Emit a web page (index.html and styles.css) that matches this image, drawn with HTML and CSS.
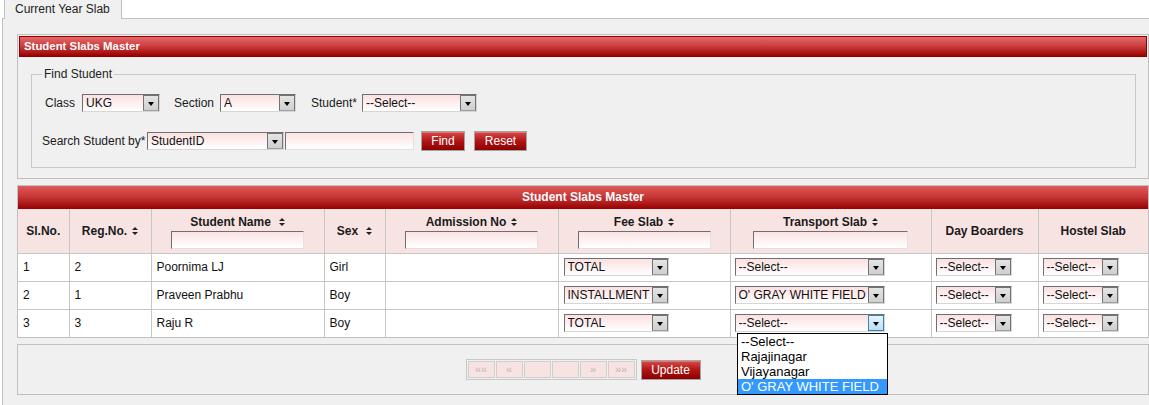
FILE: index.html
```html
<!DOCTYPE html>
<html>
<head>
<meta charset="utf-8">
<link rel="stylesheet" href="styles.css">
</head>
<body>
<div class="tabs"><div class="tab">Current Year Slab</div></div>
<div class="panel">
  <div class="box search-box">
    <div class="bar">Student Slabs Master</div>
    <fieldset class="find">
      <legend>Find Student</legend>
      <div class="row r1">
        <span class="lbl l-class">Class</span>
        <div class="sel w-class"><span class="sel-text">UKG</span><span class="arr"></span></div>
        <span class="lbl l-section">Section</span>
        <div class="sel w-section"><span class="sel-text">A</span><span class="arr"></span></div>
        <span class="lbl l-student">Student*</span>
        <div class="sel w-student"><span class="sel-text">--Select--</span><span class="arr"></span></div>
      </div>
      <div class="row r2">
        <span class="lbl l-search">Search Student by*</span>
        <div class="sel w-search"><span class="sel-text">StudentID</span><span class="arr"></span></div>
        <span class="txt w-searchtxt"></span>
        <span class="btn b-find">Find</span>
        <span class="btn b-reset">Reset</span>
      </div>
    </fieldset>
  </div>

  <div class="box table-box">
    <div class="bar bar-center">Student Slabs Master</div>
    <table>
      <colgroup>
        <col class="c1"><col class="c2"><col class="c3"><col class="c4"><col class="c5"><col class="c6"><col class="c7"><col class="c8"><col class="c9">
      </colgroup>
      <thead>
        <tr>
          <th>Sl.No.</th>
          <th>Reg.No.<svg class="sort" width="6" height="8" viewBox="0 0 6 8"><path d="M3 0L6 3H0zM0 5h6L3 8z"/></svg></th>
          <th><div class="th-t">Student Name<svg class="sort sp" width="6" height="8" viewBox="0 0 6 8"><path d="M3 0L6 3H0zM0 5h6L3 8z"/></svg></div><span class="txt w-filter"></span></th>
          <th>Sex<svg class="sort sp" width="6" height="8" viewBox="0 0 6 8"><path d="M3 0L6 3H0zM0 5h6L3 8z"/></svg></th>
          <th><div class="th-t">Admission No<svg class="sort" width="6" height="8" viewBox="0 0 6 8"><path d="M3 0L6 3H0zM0 5h6L3 8z"/></svg></div><span class="txt w-filter"></span></th>
          <th><div class="th-t">Fee Slab<svg class="sort" width="6" height="8" viewBox="0 0 6 8"><path d="M3 0L6 3H0zM0 5h6L3 8z"/></svg></div><span class="txt w-filter"></span></th>
          <th><div class="th-t">Transport Slab<svg class="sort" width="6" height="8" viewBox="0 0 6 8"><path d="M3 0L6 3H0zM0 5h6L3 8z"/></svg></div><span class="txt w-filter-wide"></span></th>
          <th>Day Boarders</th>
          <th>Hostel Slab</th>
        </tr>
      </thead>
      <tbody>
        <tr>
          <td>1</td><td>2</td><td>Poornima LJ</td><td>Girl</td><td></td>
          <td><div class="sel w-fee"><span class="sel-text">TOTAL</span><span class="arr"></span></div></td>
          <td><div class="sel w-trans"><span class="sel-text">--Select--</span><span class="arr"></span></div></td>
          <td><div class="sel w-small"><span class="sel-text">--Select--</span><span class="arr"></span></div></td>
          <td><div class="sel w-small"><span class="sel-text">--Select--</span><span class="arr"></span></div></td>
        </tr>
        <tr>
          <td>2</td><td>1</td><td>Praveen Prabhu</td><td>Boy</td><td></td>
          <td><div class="sel w-fee"><span class="sel-text">INSTALLMENT</span><span class="arr"></span></div></td>
          <td><div class="sel w-trans"><span class="sel-text">O' GRAY WHITE FIELD</span><span class="arr"></span></div></td>
          <td><div class="sel w-small"><span class="sel-text">--Select--</span><span class="arr"></span></div></td>
          <td><div class="sel w-small"><span class="sel-text">--Select--</span><span class="arr"></span></div></td>
        </tr>
        <tr>
          <td>3</td><td>3</td><td>Raju R</td><td>Boy</td><td></td>
          <td><div class="sel w-fee"><span class="sel-text">TOTAL</span><span class="arr"></span></div></td>
          <td><div class="sel w-trans"><span class="sel-text">--Select--</span><span class="arr arr-hot"></span></div></td>
          <td><div class="sel w-small"><span class="sel-text">--Select--</span><span class="arr"></span></div></td>
          <td><div class="sel w-small"><span class="sel-text">--Select--</span><span class="arr"></span></div></td>
        </tr>
      </tbody>
    </table>
  </div>

  <div class="box pager-box">
    <div class="pager">
      <span class="pg">&laquo;&laquo;</span><span class="pg">&laquo;</span><span class="pg"></span><span class="pg"></span><span class="pg">&raquo;</span><span class="pg">&raquo;&raquo;</span>
    </div>
    <span class="btn b-update">Update</span>
  </div>
</div>

<div class="popup">
  <div class="opt">--Select--</div>
  <div class="opt">Rajajinagar</div>
  <div class="opt">Vijayanagar</div>
  <div class="opt on">O' GRAY WHITE FIELD</div>
</div>
</body>
</html>
```
FILE: styles.css
```css
* { box-sizing: border-box; }
body {
  margin: 0;
  background: #fff;
  font-family: "Liberation Sans", Arial, sans-serif;
  font-size: 12px;
  color: #1a1a1a;
}
.tabs {
  height: 18px;
  padding-left: 4px;
  position: relative;
  z-index: 1;
}
.tab {
  width: 118px;
  height: 19px;
  border: 1px solid #c0c0c0;
  border-top: none;
  border-bottom: none;
  background: #f0f0f0;
  padding: 2px 0 0 10px;
  line-height: 14px;
  color: #222;
}
.panel {
  margin: 0 -3px 0 2px;
  border: 1px solid #c0c0c0;
  background: #f0f0f0;
  padding: 15px 0 10px 14px;
}
.box {
  width: 1132px;
  border: 1px solid #c0c0c0;
}
.search-box {
  padding: 1px;
  height: 145px;
}
.bar {
  height: 21px;
  border: 1px solid #8c0000;
  background: linear-gradient(#e46767, #c93c3c 50%, #9a0000);
  color: #fff;
  font-weight: bold;
  font-size: 11.4px;
  line-height: 19px;
  padding-left: 4px;
}
.find {
  margin: 10px 11px 0 12px;
  border: 1px solid #c8c8c8;
  padding: 13px 0 17px 0;
}
.find legend {
  margin-left: 10px;
  padding: 0 2px;
  line-height: 14px;
  color: #222;
}
.row {
  display: flex;
  align-items: center;
}
.r1 { padding-left: 13px; height: 18px; }
.r2 { padding-left: 10px; height: 19px; margin-top: 19px; }
.lbl { color: #1a1a1a; white-space: nowrap; }
.l-class { width: 37px; }
.l-section { width: 46px; margin-left: 14px; }
.l-student { width: 51px; margin-left: 15px; }
.l-search { width: 105px; }

.sel {
  display: flex;
  align-items: center;
  height: 18px;
  border: 1px solid;
  border-color: #6f6f6f #d6d6d6 #d6d6d6 #6f6f6f;
  background: linear-gradient(#fbe0e0, #fff);
  padding-left: 3px;
  color: #111;
}
.sel-text {
  flex: 1;
  white-space: nowrap;
  overflow: hidden;
  line-height: 16px;
}
.arr {
  flex: none;
  width: 16px;
  height: 16px;
  border: 1px solid #727272;
  border-bottom-color: #a0a0a0;
  background: linear-gradient(#e4e4e4, #cfcfcf);
  display: flex;
  align-items: center;
  justify-content: center;
  padding-top: 2px;
}
.arr::after {
  content: "";
  border-top: 4px solid #000;
  border-left: 3.5px solid transparent;
  border-right: 3.5px solid transparent;
}
.arr-hot {
  border-color: #3c7fb1;
  background: linear-gradient(#e5f4fc, #b9def6);
}
.w-class { width: 78px; }
.w-section { width: 76px; }
.w-student { width: 115px; }
.w-search { width: 137px; }
.w-fee { width: 105px; }
.w-trans { width: 150px; }
.w-small { width: 76px; }

.txt {
  display: inline-block;
  height: 18px;
  border: 1px solid;
  border-color: #6f6f6f #e2e2e2 #e2e2e2 #6f6f6f;
  background: linear-gradient(#fbe3e3, #fff);
}
.w-searchtxt { width: 129px; margin-left: 1px; }
.w-filter { width: 133px; }
.w-filter-wide { width: 155px; }

.btn {
  display: inline-flex;
  align-items: center;
  justify-content: center;
  height: 20px;
  border: 1px solid #a3a3a3;
  background: linear-gradient(#d84a4a, #b01515 50%, #8c0000);
  color: #fff;
  font-size: 12px;
  box-shadow: inset 0 1px 0 rgba(255,255,255,0.25);
}
.b-find { width: 44px; margin-left: 7px; }
.b-reset { width: 53px; margin-left: 9px; }
.b-update { width: 60px; height: 20px; margin-top: 1px; }

.table-box { margin-top: 6px; }
.bar-center {
  border: none;
  height: 23px;
  line-height: 23px;
  font-size: 12px;
  text-align: center;
  padding: 0;
  background: linear-gradient(#df5a5a, #c43434 50%, #960000);
}
table {
  width: 100%;
  border-collapse: collapse;
  table-layout: fixed;
  border-style: hidden;
}
.c1 { width: 51px; }
.c2 { width: 82px; }
.c3 { width: 173px; }
.c4 { width: 61px; }
.c5 { width: 173px; }
.c6 { width: 172px; }
.c7 { width: 201px; }
.c8 { width: 107px; }
.c9 { width: 110px; }
th, td { border: 1px solid #c6c6c6; }
th {
  height: 44px;
  background: #f8e3e3;
  font-weight: bold;
  color: #1a1a1a;
  text-align: center;
  vertical-align: middle;
  padding: 0;
  white-space: nowrap;
}
.th-t { line-height: 14px; margin: 2px 0 2px; }
th .txt { vertical-align: top; }
.sort { margin-left: 5px; fill: #222; vertical-align: 0; }
.sort.sp { margin-left: 8px; }
td {
  height: 28px;
  background: #fff;
  padding: 0 0 0 5px;
  color: #111;
  white-space: nowrap;
}
td:nth-child(n+7) { padding-left: 4px; }

.pager-box {
  margin-top: 6px;
  height: 51px;
  display: flex;
  justify-content: center;
  align-items: flex-start;
  padding-top: 14px;
  gap: 4px;
}
.pager {
  display: flex;
  gap: 1px;
  border: 1px solid #c8c8c8;
  padding: 1px;
  height: 21px;
}
.pg {
  width: 27px;
  height: 17px;
  border: 1px solid #cfcfcf;
  background: #f8e3e3;
  color: #c4b4b4;
  font-size: 11px;
  line-height: 15px;
  text-align: center;
}

.popup {
  position: absolute;
  left: 737px;
  top: 333px;
  width: 151px;
  border: 1px solid #000;
  background: #fff;
  font-size: 13px;
  z-index: 5;
}
.opt {
  height: 15px;
  line-height: 15px;
  padding-left: 3px;
  color: #000;
  white-space: nowrap;
}
.opt.on { background: #3399ff; color: #fff; }
```
